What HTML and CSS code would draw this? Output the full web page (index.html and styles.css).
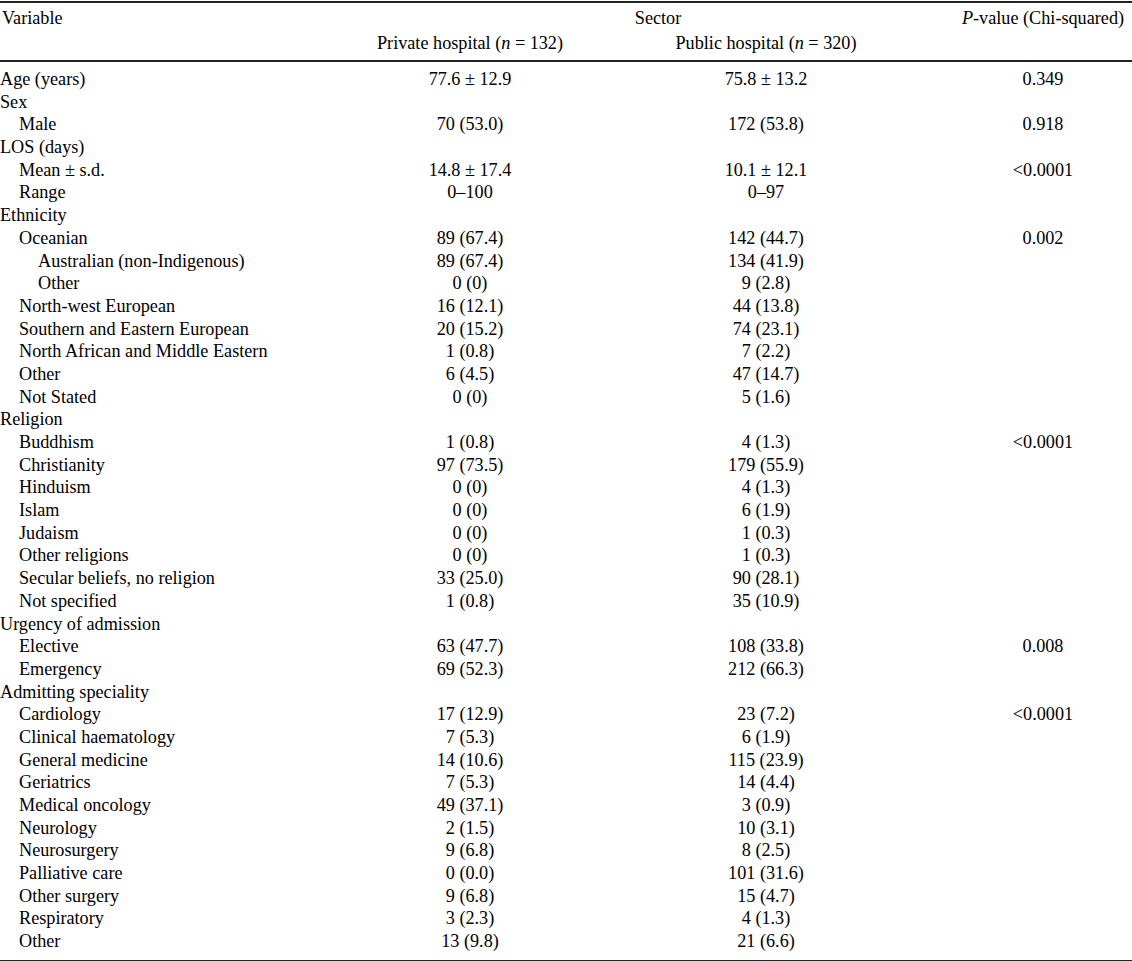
FILE: index.html
```html
<!DOCTYPE html>
<html>
<head>
<meta charset="utf-8">
<link rel="stylesheet" href="styles.css">
</head>
<body>
<table class="data">
  <colgroup>
    <col class="c1"><col class="c2"><col class="c3"><col class="c4">
  </colgroup>
  <thead>
    <tr class="h1">
      <th class="left">Variable</th>
      <th colspan="2">Sector</th>
      <th><i>P</i>-value (Chi-squared)</th>
    </tr>
    <tr class="h2">
      <th></th>
      <th>Private hospital (<i>n</i> = 132)</th>
      <th>Public hospital (<i>n</i> = 320)</th>
      <th></th>
    </tr>
  </thead>
  <tbody>
    <tr><td class="l0">Age (years)</td><td>77.6 ± 12.9</td><td>75.8 ± 13.2</td><td>0.349</td></tr>
    <tr><td class="l0">Sex</td><td></td><td></td><td></td></tr>
    <tr><td class="l1">Male</td><td>70 (53.0)</td><td>172 (53.8)</td><td>0.918</td></tr>
    <tr><td class="l0">LOS (days)</td><td></td><td></td><td></td></tr>
    <tr><td class="l1">Mean ± s.d.</td><td>14.8 ± 17.4</td><td>10.1 ± 12.1</td><td>&lt;0.0001</td></tr>
    <tr><td class="l1">Range</td><td>0–100</td><td>0–97</td><td></td></tr>
    <tr><td class="l0">Ethnicity</td><td></td><td></td><td></td></tr>
    <tr><td class="l1">Oceanian</td><td>89 (67.4)</td><td>142 (44.7)</td><td>0.002</td></tr>
    <tr><td class="l2">Australian (non-Indigenous)</td><td>89 (67.4)</td><td>134 (41.9)</td><td></td></tr>
    <tr><td class="l2">Other</td><td>0 (0)</td><td>9 (2.8)</td><td></td></tr>
    <tr><td class="l1">North-west European</td><td>16 (12.1)</td><td>44 (13.8)</td><td></td></tr>
    <tr><td class="l1">Southern and Eastern European</td><td>20 (15.2)</td><td>74 (23.1)</td><td></td></tr>
    <tr><td class="l1">North African and Middle Eastern</td><td>1 (0.8)</td><td>7 (2.2)</td><td></td></tr>
    <tr><td class="l1">Other</td><td>6 (4.5)</td><td>47 (14.7)</td><td></td></tr>
    <tr><td class="l1">Not Stated</td><td>0 (0)</td><td>5 (1.6)</td><td></td></tr>
    <tr><td class="l0">Religion</td><td></td><td></td><td></td></tr>
    <tr><td class="l1">Buddhism</td><td>1 (0.8)</td><td>4 (1.3)</td><td>&lt;0.0001</td></tr>
    <tr><td class="l1">Christianity</td><td>97 (73.5)</td><td>179 (55.9)</td><td></td></tr>
    <tr><td class="l1">Hinduism</td><td>0 (0)</td><td>4 (1.3)</td><td></td></tr>
    <tr><td class="l1">Islam</td><td>0 (0)</td><td>6 (1.9)</td><td></td></tr>
    <tr><td class="l1">Judaism</td><td>0 (0)</td><td>1 (0.3)</td><td></td></tr>
    <tr><td class="l1">Other religions</td><td>0 (0)</td><td>1 (0.3)</td><td></td></tr>
    <tr><td class="l1">Secular beliefs, no religion</td><td>33 (25.0)</td><td>90 (28.1)</td><td></td></tr>
    <tr><td class="l1">Not specified</td><td>1 (0.8)</td><td>35 (10.9)</td><td></td></tr>
    <tr><td class="l0">Urgency of admission</td><td></td><td></td><td></td></tr>
    <tr><td class="l1">Elective</td><td>63 (47.7)</td><td>108 (33.8)</td><td>0.008</td></tr>
    <tr><td class="l1">Emergency</td><td>69 (52.3)</td><td>212 (66.3)</td><td></td></tr>
    <tr><td class="l0">Admitting speciality</td><td></td><td></td><td></td></tr>
    <tr><td class="l1">Cardiology</td><td>17 (12.9)</td><td>23 (7.2)</td><td>&lt;0.0001</td></tr>
    <tr><td class="l1">Clinical haematology</td><td>7 (5.3)</td><td>6 (1.9)</td><td></td></tr>
    <tr><td class="l1">General medicine</td><td>14 (10.6)</td><td>115 (23.9)</td><td></td></tr>
    <tr><td class="l1">Geriatrics</td><td>7 (5.3)</td><td>14 (4.4)</td><td></td></tr>
    <tr><td class="l1">Medical oncology</td><td>49 (37.1)</td><td>3 (0.9)</td><td></td></tr>
    <tr><td class="l1">Neurology</td><td>2 (1.5)</td><td>10 (3.1)</td><td></td></tr>
    <tr><td class="l1">Neurosurgery</td><td>9 (6.8)</td><td>8 (2.5)</td><td></td></tr>
    <tr><td class="l1">Palliative care</td><td>0 (0.0)</td><td>101 (31.6)</td><td></td></tr>
    <tr><td class="l1">Other surgery</td><td>9 (6.8)</td><td>15 (4.7)</td><td></td></tr>
    <tr><td class="l1">Respiratory</td><td>3 (2.3)</td><td>4 (1.3)</td><td></td></tr>
    <tr><td class="l1">Other</td><td>13 (9.8)</td><td>21 (6.6)</td><td></td></tr>
  </tbody>
</table>
</body>
</html>
```
FILE: styles.css
```css
html, body {
  margin: 0;
  padding: 0;
  background: #fff;
}
body {
  padding-top: 1px;
  font-family: "Liberation Serif", "Times New Roman", serif;
  font-size: 18.2px;
  color: #000;
}
.data {
  width: 1132px;
  table-layout: fixed;
  border-collapse: collapse;
  border-top: 2px solid #222;
  border-bottom: 2px solid #222;
}
.c1 { width: 362px; }
.c2 { width: 216px; }
.c3 { width: 376px; }
.c4 { width: 178px; }
.data th {
  font-weight: normal;
  text-align: center;
  padding: 0;
  white-space: nowrap;
}
.data th.left { text-align: left; padding-left: 2px; }
.h1 th { height: 25px; line-height: 25px; padding-top: 3px; }
.h2 th { height: 25px; line-height: 25px; padding-bottom: 4px; }
.h2 { border-bottom: 2px solid #222; }
.data td {
  padding: 0;
  line-height: 22.68px;
  height: 22.68px;
  text-align: center;
  white-space: nowrap;
}
.data tbody tr:first-child td { padding-top: 6px; }
.data tbody tr:last-child td { padding-bottom: 7px; }
.data td.l0 { text-align: left; padding-left: 0; }
.data td.l1 { text-align: left; padding-left: 19px; }
.data td.l2 { text-align: left; padding-left: 38px; }
```
